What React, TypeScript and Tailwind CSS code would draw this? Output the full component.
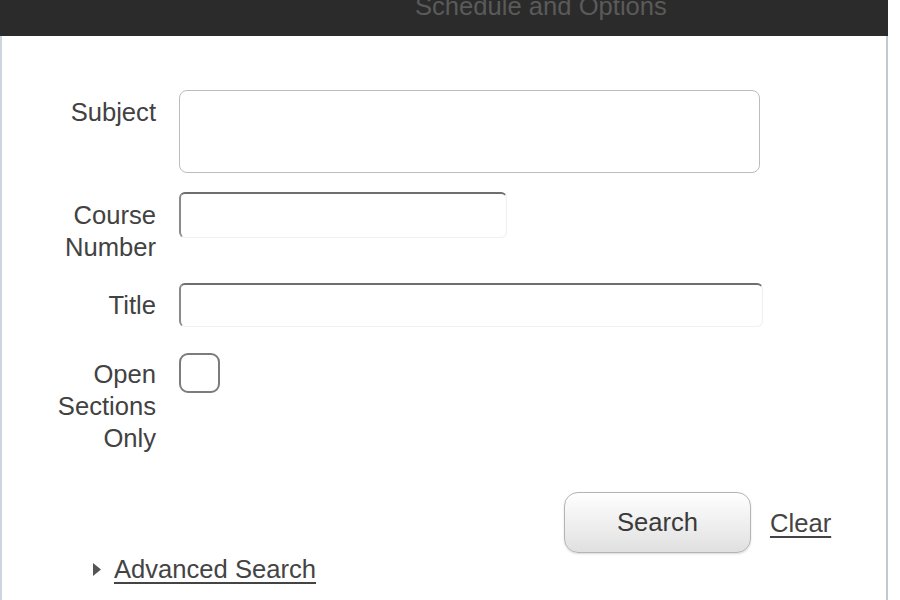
export default function App() {
  return (
    <div className="min-h-[600px] w-[900px] bg-white text-[25.6px] text-[#424242] [font-family:'Liberation_Sans',Arial,sans-serif]">
      <div className="w-[888px]">
        {/* header bar, title is cut off at the top */}
        <div className="h-[36px] overflow-hidden bg-[#2b2b2b]">
          <div className="-mt-[9px] pl-[415px] text-[25.6px] leading-[30px] text-[#5a5a5a]">
            Schedule and Options
          </div>
        </div>

        <div className="min-h-[564px] border-l-2 border-r-2 border-l-[#cfd5df] border-r-[#c3c9d4] pt-[54px]">
          {/* Subject */}
          <div className="flex items-start">
            <label className="w-[154px] pt-[6px] text-right leading-[32px]">Subject</label>
            <div className="ml-[23px] h-[83px] w-[581px] rounded-[8px] border-[1.5px] border-[#bcbcbc] bg-white" />
          </div>

          {/* Course Number */}
          <div className="mt-[19px] flex items-start">
            <label className="w-[154px] pt-[7px] text-right leading-[32px]">
              Course
              <br />
              Number
            </label>
            <div className="ml-[23px] h-[46px] w-[328px] rounded-[6px] border-b border-l-2 border-r border-t-2 border-b-[#f0f0f0] border-l-[#8a8a8a] border-r-[#eeeeee] border-t-[#6e6e6e] bg-white" />
          </div>

          {/* Title */}
          <div className="mt-[20px] flex items-start">
            <label className="w-[154px] pt-[6px] text-right leading-[32px]">Title</label>
            <div className="ml-[23px] h-[44px] w-[584px] rounded-[6px] border-b border-l-2 border-r border-t-2 border-b-[#f0f0f0] border-l-[#8a8a8a] border-r-[#eeeeee] border-t-[#6e6e6e] bg-white" />
          </div>

          {/* Open Sections Only */}
          <div className="mt-[26px] flex items-start">
            <label className="w-[154px] pt-[5px] text-right leading-[32px]">
              Open
              <br />
              Sections
              <br />
              Only
            </label>
            <div className="ml-[23px] h-[40px] w-[41px] rounded-[9px] border-2 border-[#7c7c7c] bg-white" />
          </div>

          {/* buttons */}
          <div className="mt-[38px] flex items-center">
            <button className="ml-[562px] h-[61px] w-[187px] rounded-[14px] border-[1.5px] border-[#b4b4b4] bg-gradient-to-b from-white to-[#e0e0e0] text-[25.6px] text-[#3a3a3a] shadow-[0_1px_2px_rgba(0,0,0,0.15)]">
              Search
            </button>
            <a className="ml-[19px] leading-[32px] text-[#444] underline decoration-2 underline-offset-[4px]">
              Clear
            </a>
          </div>

          {/* advanced search */}
          <div className="flex items-center">
            <svg className="ml-[91px]" width="8" height="13" viewBox="0 0 8 13">
              <path d="M0 0 L8 6.5 L0 13 Z" fill="#555" />
            </svg>
            <a className="ml-[13px] leading-[32px] text-[#444] underline decoration-2 underline-offset-[4px]">
              Advanced Search
            </a>
          </div>
        </div>
      </div>
    </div>
  );
}
